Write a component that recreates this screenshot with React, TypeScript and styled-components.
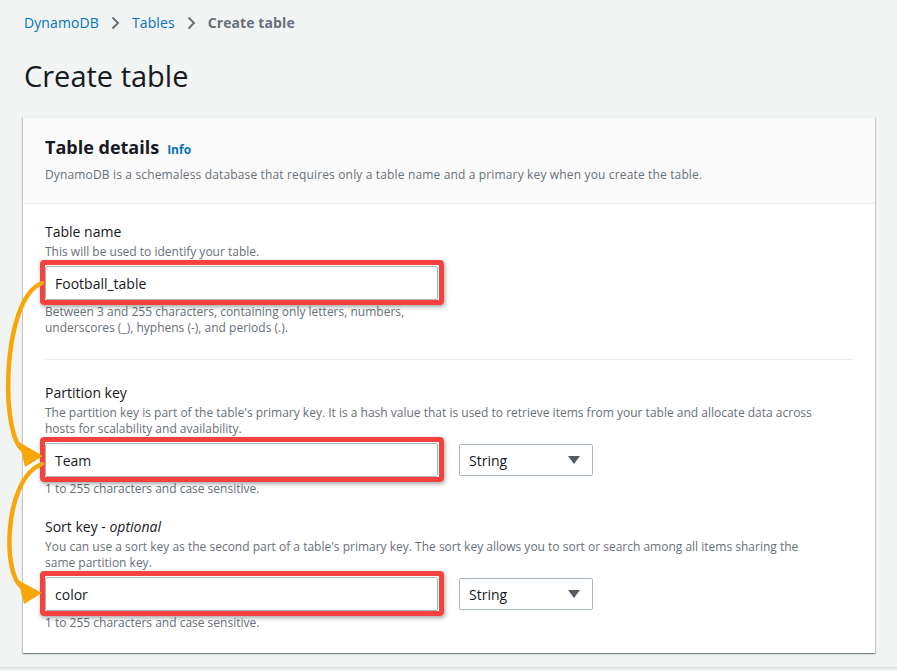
import React from "react";
import styled, { createGlobalStyle } from "styled-components";

const Global = createGlobalStyle`
  html, body { margin: 0; padding: 0; background: #f2f3f3; }
  body { font-family: "Open Sans", "Noto Sans", sans-serif; color: #16191f; }
  * { box-sizing: border-box; }
`;

const Page = styled.div`
  position: relative;
  width: 897px;
  height: 671px;
  overflow: hidden;
  padding: 13px 22px 0 24px;
`;

const Breadcrumbs = styled.nav`
  display: flex;
  align-items: center;
  gap: 12px;
  font-size: 14px;
  line-height: 20px;
  height: 20px;
`;

const Crumb = styled.span<{ $current?: boolean }>`
  color: ${(p) => (p.$current ? "#687078" : "#0073bb")};
  font-weight: ${(p) => (p.$current ? 700 : 400)};
  letter-spacing: 0.1px;
`;

const Title = styled.h1`
  margin: 25px 0 0 0;
  font-size: 29px;
  line-height: 36px;
  font-weight: 400;
  color: #16191f;
`;

const Card = styled.section`
  margin-top: 23px;
  margin-left: -1px;
  width: 852px;
  background: #fff;
  border-top: 1px solid #eaeded;
  box-shadow: 0 1px 1px 0 rgba(0, 28, 36, 0.3), 1px 1px 1px 0 rgba(0, 28, 36, 0.15),
    -1px 1px 1px 0 rgba(0, 28, 36, 0.15);
`;

const CardHeader = styled.header`
  background: #fafafa;
  border-bottom: 1px solid #eaeded;
  padding: 17px 22px 20px 22px;
`;

const HeaderTitle = styled.h2`
  margin: 0;
  display: flex;
  align-items: baseline;
  gap: 8px;
  font-size: 18px;
  line-height: 24px;
  font-weight: 700;
  color: #16191f;
`;

const InfoLink = styled.span`
  font-size: 12px;
  font-weight: 700;
  color: #0073bb;
`;

const HeaderDesc = styled.p`
  margin: 5px 0 0 0;
  font-size: 12px;
  line-height: 16px;
  color: #687078;
  letter-spacing: 0.15px;
`;

const CardBody = styled.div`
  padding: 18px 22px 22px 22px;
`;

const Field = styled.div<{ $top?: number }>`
  margin-top: ${(p) => p.$top ?? 0}px;
`;

const Label = styled.div`
  font-size: 14px;
  line-height: 20px;
  color: #16191f;
  em { font-style: italic; }
`;

const Desc = styled.div`
  margin-top: 2px;
  font-size: 12px;
  line-height: 16px;
  color: #687078;
`;

const Help = styled.div`
  margin-top: 4px;
  font-size: 12px;
  line-height: 16px;
  color: #687078;
`;

const Row = styled.div`
  margin-top: 6px;
  display: flex;
  align-items: center;
  gap: 21px;
`;

const Highlight = styled.div`
  position: relative;
  width: 393px;
  &::after {
    content: "";
    position: absolute;
    left: -5px;
    top: -6px;
    right: -6px;
    bottom: -5px;
    border: 5px solid #f5423f;
    border-radius: 4px;
    box-shadow: 1px 2px 4px rgba(0, 0, 0, 0.35);
    pointer-events: none;
  }
`;

const Input = styled.div`
  height: 34px;
  border: 1px solid #aab7b8;
  border-radius: 2px;
  background: #fff;
  display: flex;
  align-items: center;
  padding-left: 9px;
  font-size: 14px;
  color: #16191f;
`;

const Select = styled.div`
  width: 134px;
  height: 32px;
  border: 1px solid #aab7b8;
  border-radius: 2px;
  background: #fff;
  display: flex;
  align-items: center;
  justify-content: space-between;
  padding: 0 12px 0 9px;
  font-size: 14px;
  color: #16191f;
`;

const Divider = styled.hr`
  margin: 23px 0 0 0;
  border: none;
  border-top: 1px solid #eaeded;
`;

const FooterLine = styled.div`
  margin-top: 14px;
  margin-left: -24px;
  width: 897px;
  border-top: 2px solid #dfe3e3;
`;

const ArrowLayer = styled.svg`
  position: absolute;
  left: 0;
  top: 0;
  pointer-events: none;
`;

const Chevron = () => (
  <svg width="9" height="14" viewBox="0 0 9 14">
    <path d="M1.5 1.5 L7 7 L1.5 12.5" fill="none" stroke="#687078" strokeWidth="2" />
  </svg>
);

const Caret = () => (
  <svg width="12" height="8" viewBox="0 0 12 8">
    <path d="M0 0 H12 L6 8 Z" fill="#545b64" />
  </svg>
);

export default function App() {
  return (
    <Page>
      <Global />
      <Breadcrumbs>
        <Crumb>DynamoDB</Crumb>
        <Chevron />
        <Crumb>Tables</Crumb>
        <Chevron />
        <Crumb $current>Create table</Crumb>
      </Breadcrumbs>
      <Title>Create table</Title>
      <Card>
        <CardHeader>
          <HeaderTitle>
            Table details <InfoLink>Info</InfoLink>
          </HeaderTitle>
          <HeaderDesc>
            DynamoDB is a schemaless database that requires only a table name and a primary key when you create the table.
          </HeaderDesc>
        </CardHeader>
        <CardBody>
          <Field>
            <Label>Table name</Label>
            <Desc>This will be used to identify your table.</Desc>
            <Row>
              <Highlight>
                <Input>Football_table</Input>
              </Highlight>
            </Row>
            <Help>
              Between 3 and 255 characters, containing only letters, numbers,
              <br />
              underscores (_), hyphens (-), and periods (.).
            </Help>
          </Field>
          <Divider />
          <Field $top={23}>
            <Label>Partition key</Label>
            <Desc>
              The partition key is part of the table's primary key. It is a hash value that is used to retrieve items from your table and allocate data across
              <br />
              hosts for scalability and availability.
            </Desc>
            <Row>
              <Highlight>
                <Input>Team</Input>
              </Highlight>
              <Select>
                String <Caret />
              </Select>
            </Row>
            <Help>1 to 255 characters and case sensitive.</Help>
          </Field>
          <Field $top={20}>
            <Label>
              Sort key - <em>optional</em>
            </Label>
            <Desc>
              You can use a sort key as the second part of a table's primary key. The sort key allows you to sort or search among all items sharing the
              <br />
              same partition key.
            </Desc>
            <Row>
              <Highlight>
                <Input>color</Input>
              </Highlight>
              <Select>
                String <Caret />
              </Select>
            </Row>
            <Help>1 to 255 characters and case sensitive.</Help>
          </Field>
        </CardBody>
      </Card>
      <FooterLine />
      <ArrowLayer width="60" height="671" viewBox="0 0 60 671">
        <path d="M42 283 C0 299, 0 447, 26 451" fill="none" stroke="#f7a70a" strokeWidth="4.5" strokeLinecap="round" />
        <polygon points="43,456 19,442 25,467" fill="#f7a70a" />
        <path d="M42 464 C2 479, 2 584, 25 588" fill="none" stroke="#f7a70a" strokeWidth="4.5" strokeLinecap="round" />
        <polygon points="42,593 18,580 24,604" fill="#f7a70a" />
      </ArrowLayer>
    </Page>
  );
}
